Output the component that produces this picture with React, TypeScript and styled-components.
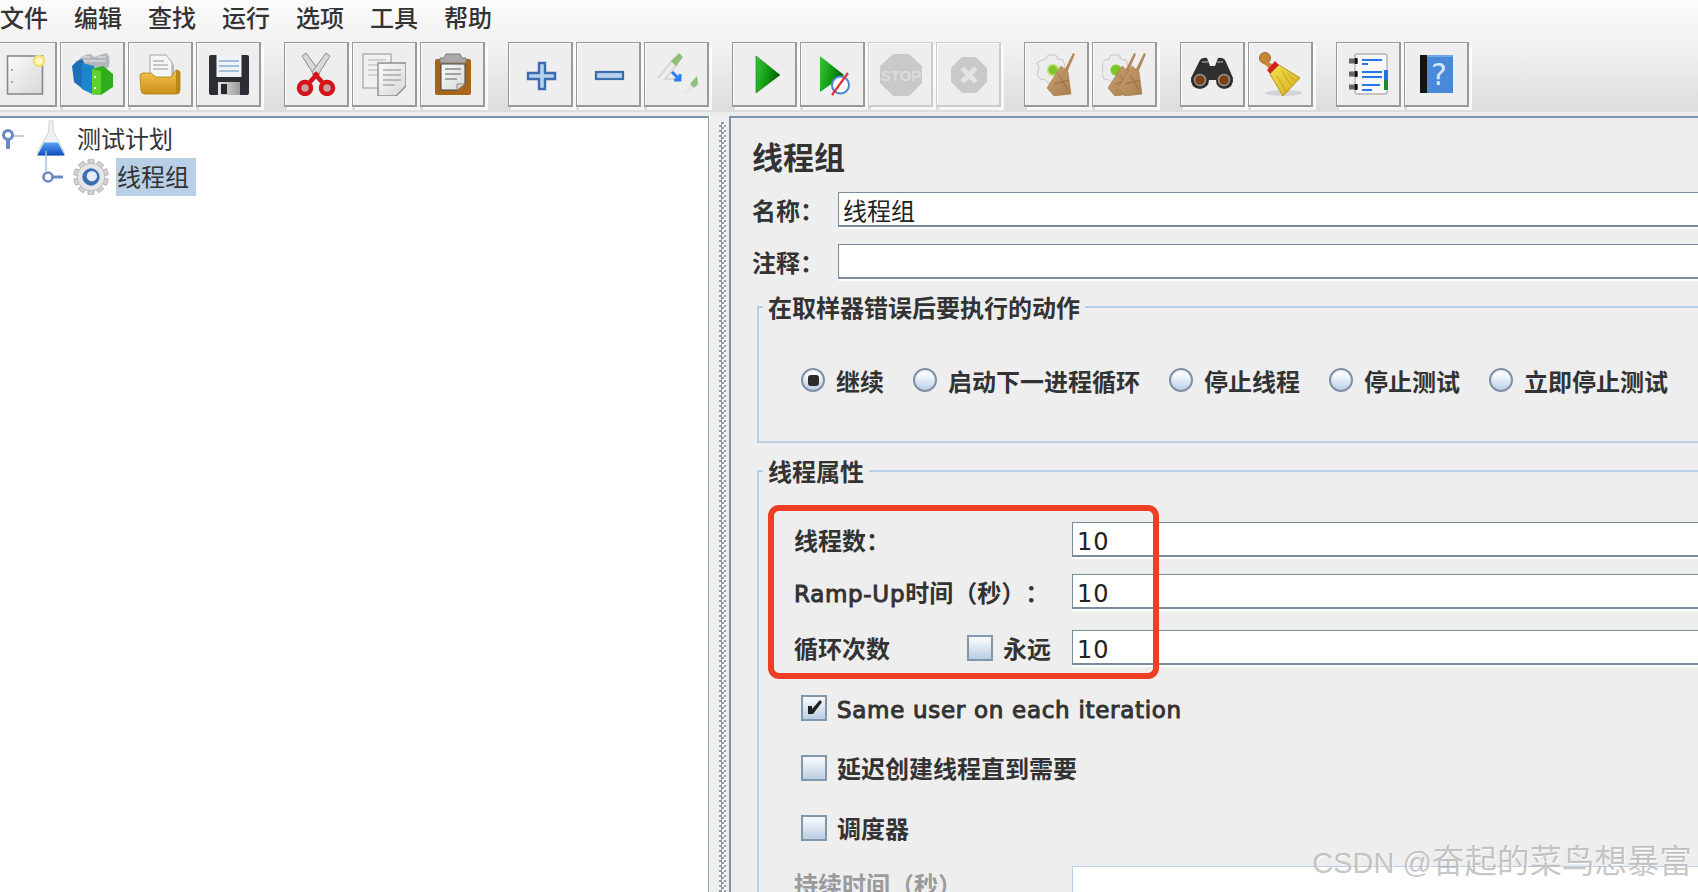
import React from "react";
import styled, { createGlobalStyle } from "styled-components";

const cjk = `"Noto Sans CJK SC", "DejaVu Sans", sans-serif`;

const Global = createGlobalStyle`
  html, body { margin: 0; padding: 0; height: 100%; overflow: hidden; background: #eeeeee; }
  body { font-family: ${cjk}; color: #333; text-spacing-trim: space-all; }
`;

const Page = styled.div`
  position: relative;
  width: 1698px;
  height: 892px;
  overflow: hidden;
  display: flex;
  flex-direction: column;
`;

const Chrome = styled.div`
  height: 116px;
  flex: none;
  background: linear-gradient(#fbfbfb 0, #f1f1f1 40%, #dcdcdc 96%, #ececec 97%);
`;

const MenuBar = styled.nav`
  height: 36px;
  display: flex;
  align-items: center;
`;

const MenuItem = styled.span`
  width: 74px;
  font-size: 24px;
  line-height: 34px;
  height: 36px;
  font-weight: 500;
  color: #333;
`;

const Toolbar = styled.div`
  display: flex;
  margin-left: -8px;
  padding-top: 6px;
  gap: 23px;
`;

const ToolGroup = styled.div`
  display: flex;
  gap: 3px;
`;

const ToolButton = styled.div<{ $off?: boolean }>`
  width: 65px;
  height: 65px;
  box-sizing: border-box;
  display: flex;
  align-items: center;
  justify-content: center;
  background: #eeeeee;
  border-style: solid;
  border-width: 1px 2px 2px 1px;
  border-color: ${(p) => (p.$off ? "#cccccc" : "#999999")};
  box-shadow: inset 1px 1px 0 #fafafa, 3px 3px 0 rgba(255, 255, 255, 0.75);
`;

const Main = styled.div`
  flex: 1;
  display: flex;
  min-height: 0;
`;

const TreePane = styled.div`
  width: 709px;
  flex: none;
  box-sizing: border-box;
  background: #fff;
  border-top: 2px solid #7e94a8;
  border-right: 1px solid #8b9eb0;
  padding-top: 2px;
`;

const TreeRow = styled.div<{ $indent: number }>`
  display: flex;
  align-items: center;
  height: 38px;
  padding-left: ${(p) => p.$indent}px;
`;

const TreeLabel = styled.span<{ $selected?: boolean }>`
  font-size: 24px;
  line-height: 36px;
  height: 38px;
  margin-left: 6px;
  padding: 0 7px 0 1px;
  color: #333;
  background: ${(p) => (p.$selected ? "#b8cfe5" : "transparent")};
`;

const Gutter = styled.div`
  width: 20px;
  flex: none;
  box-sizing: border-box;
  padding: 6px 3px 0 9px;
  background: #eeeeee;
  border-left: 1px solid #fafafa;
`;

const GripDots = styled.div`
  height: 100%;
  background: conic-gradient(#8f9aa5 25%, #fafafa 0 50%, #8f9aa5 0 75%, #fafafa 0) 0 0 / 5px 5px;
`;

const EditorPane = styled.div`
  flex: 1;
  min-width: 0;
  overflow: hidden;
  background: #eeeeee;
  border-top: 2px solid #7e94a8;
  border-left: 2px solid #7e94a8;
  padding: 20px 0 0 21px;
`;

const Title = styled.h1`
  margin: 0 0 18px;
  height: 36px;
  font-size: 31px;
  line-height: 36px;
  font-weight: 700;
  color: #333;
`;

const NameRow = styled.div`
  display: flex;
  align-items: center;
  height: 35px;
  margin-bottom: 17px;
  &:last-of-type { margin-bottom: 0; }
`;

const NameLabel = styled.span`
  width: 86px;
  flex: none;
  font-size: 24px;
  font-weight: 700;
  color: #333;
`;

const Field = styled.div<{ $off?: boolean }>`
  flex: 1;
  height: 35px;
  box-sizing: border-box;
  background: #fff;
  border-style: solid;
  border-color: ${(p) => (p.$off ? "#b8cfe5" : "#7b8b9b")};
  border-width: 1px 0 ${(p) => (p.$off ? 0 : 2)}px 1px;
  box-shadow: 0 2px 0 #fff;
  padding-left: 4px;
  font-size: 24px;
  line-height: 34px;
  color: #222;
`;

const NumberValue = styled.span`
  font-family: "DejaVu Sans", sans-serif;
  font-size: 24px;
  letter-spacing: 1px;
`;

const LatinText = styled.span`
  font-family: "DejaVu Sans", sans-serif;
  font-size: 23px;
  font-weight: 400;
  letter-spacing: 0.7px;
  -webkit-text-stroke: 1px #333;
`;

const CheckLatin = styled(LatinText)`
  margin-top: 3px;
`;

const Group = styled.fieldset<{ $height: number }>`
  height: ${(p) => p.$height}px;
  box-sizing: border-box;
  margin: 13px -20px 0 5px;
  padding: 0;
  border: 2px solid #b8cfe5;
  min-width: 0;
`;

const GroupTitle = styled.legend`
  margin-left: 4px;
  padding: 0 5px;
  height: 30px;
  font-size: 24px;
  line-height: 30px;
  font-weight: 700;
  color: #333;
`;

const RadioRow = styled.div`
  display: flex;
  align-items: center;
  gap: 29px;
  margin: 42px 0 0 42px;
`;

const RadioItem = styled.label`
  display: flex;
  align-items: center;
  gap: 11px;
  font-size: 24px;
  line-height: 34px;
  font-weight: 700;
  color: #333;
`;

const RadioDot = styled.span<{ $on?: boolean }>`
  width: 24px;
  height: 24px;
  flex: none;
  margin-top: -2px;
  box-sizing: border-box;
  border-radius: 50%;
  border: 2px solid #7f92a5;
  background: linear-gradient(#f6f9fc 25%, #b8cfe5);
  display: flex;
  align-items: center;
  justify-content: center;
  &::after {
    content: "";
    display: ${(p) => (p.$on ? "block" : "none")};
    width: 11px;
    height: 11px;
    border-radius: 3px;
    background: #2c2c2c;
  }
`;

const PropRows = styled.div`
  margin: 36px 0 0 35px;
  display: flex;
  flex-direction: column;
`;

const PropRow = styled.div<{ $below: number }>`
  display: flex;
  align-items: center;
  height: 35px;
  margin-bottom: ${(p) => p.$below}px;
`;

const PropLabel = styled.span<{ $off?: boolean }>`
  width: 278px;
  flex: none;
  font-size: 24px;
  font-weight: 700;
  color: ${(p) => (p.$off ? "#9a9a9a" : "#333")};
  white-space: nowrap;
`;

const LoopLabel = styled(PropLabel)`
  width: 173px;
`;

const ForeverLabel = styled.span`
  width: 69px;
  flex: none;
  margin-left: 10px;
  font-size: 24px;
  font-weight: 700;
  color: #333;
`;

const CheckBox = styled.span`
  width: 26px;
  height: 26px;
  flex: none;
  box-sizing: border-box;
  border: 2px solid #8297ab;
  background: linear-gradient(#f3f6f9 15%, #b9cee2);
  display: flex;
  align-items: center;
  justify-content: center;
`;

const CheckRow = styled.label`
  display: flex;
  align-items: center;
  gap: 10px;
  height: 26px;
  margin: 0 0 34px 7px;
  font-size: 24px;
  line-height: 24px;
  font-weight: 700;
  color: #333;
  white-space: nowrap;
  &:nth-last-of-type(1) { margin-bottom: 25px; }
`;

const Highlight = styled.div`
  position: absolute;
  left: 768px;
  top: 505px;
  width: 391px;
  height: 174px;
  box-sizing: border-box;
  border: 6px solid #ee3f24;
  border-radius: 11px;
  pointer-events: none;
`;

const Watermark = styled.div`
  position: absolute;
  right: 6px;
  top: 842px;
  font-family: "Liberation Sans", "Noto Sans CJK SC", sans-serif;
  font-size: 32.5px;
  line-height: 40px;
  color: rgba(150, 150, 150, 0.55);
  text-shadow: 1px 1px 1px rgba(255, 255, 255, 0.9);
  white-space: nowrap;
  pointer-events: none;
`;

const WatermarkLatin = styled.span`
  font-size: 29px;
`;

const Svg: React.FC<{ children: React.ReactNode; size?: number }> = ({ children, size = 44 }) => (
  <svg width={size} height={size} viewBox="0 0 44 44" style={{ flex: "none" }}>
    {children}
  </svg>
);

const Defs = () => (
  <svg width="0" height="0" style={{ position: "absolute" }}>
    <defs>
      <linearGradient id="paper" x1="0" y1="0" x2="1" y2="1">
        <stop offset="0" stopColor="#fafafa" />
        <stop offset="1" stopColor="#d8d8d8" />
      </linearGradient>
      <linearGradient id="folder" x1="0" y1="0" x2="0" y2="1">
        <stop offset="0" stopColor="#f3c650" />
        <stop offset="1" stopColor="#cc8f18" />
      </linearGradient>
      <linearGradient id="play" x1="0" y1="0" x2="1" y2="0.3">
        <stop offset="0" stopColor="#3dc53d" />
        <stop offset="0.6" stopColor="#0c9a0c" />
        <stop offset="1" stopColor="#045a04" />
      </linearGradient>
      <linearGradient id="broomStraw" x1="0" y1="0" x2="1" y2="1">
        <stop offset="0" stopColor="#c9a070" />
        <stop offset="1" stopColor="#a97f4e" />
      </linearGradient>
      <linearGradient id="gold" x1="0" y1="0" x2="1" y2="1">
        <stop offset="0" stopColor="#f5e35a" />
        <stop offset="1" stopColor="#d2aa12" />
      </linearGradient>
      <linearGradient id="flask" x1="0" y1="0" x2="0" y2="1">
        <stop offset="0" stopColor="#5aa0f0" />
        <stop offset="1" stopColor="#0c4fc0" />
      </linearGradient>
      <linearGradient id="shutter" x1="0" y1="0" x2="1" y2="0">
        <stop offset="0" stopColor="#e6e6e6" />
        <stop offset="1" stopColor="#9a9a9a" />
      </linearGradient>
    </defs>
  </svg>
);

const NewIcon = () => (
  <Svg>
    <rect x="5.5" y="4" width="35" height="38" fill="url(#paper)" stroke="#8a8a8a" strokeWidth="1.6" />
    <rect x="9" y="17" width="2" height="2" fill="#aaa" />
    <rect x="9" y="29" width="2" height="2" fill="#aaa" />
    <circle cx="37" cy="9" r="5" fill="#fff8c0" stroke="#f2e070" strokeWidth="2.4" />
  </Svg>
);

const TemplatesIcon = () => (
  <Svg>
    <path d="M7 12 Q10 2 21 2 L24 5 L36 1 Q41 3 39 14 L26 30 Z" fill="#b4b8ba" />
    <path d="M11 5 H20 M27 5 H36 M11 9 H36" stroke="#d6d8da" strokeWidth="1.4" />
    <path d="M7 9 L12 7 L14 10 V38 L4 30 L2 14 Z" fill="#1d6fb8" />
    <path d="M12 11 L24 14 V43 L12 37 Z" fill="#1a86cf" />
    <path d="M22 17 L33 14 L43 22 V35 L31 43 L22 42 Z" fill="#2fae1c" />
    <path d="M22 17 L31 19 V43 L22 42 Z" fill="#5fd02e" />
    <rect x="24" y="24" width="2" height="2" fill="#fff" />
    <rect x="24" y="35" width="2" height="2" fill="#fff" />
  </Svg>
);

const OpenIcon = () => (
  <Svg>
    <path d="M12 3 H28 L34 10 V26 H12 Z" fill="#f6f6f6" stroke="#a5a5a5" />
    <path d="M15 9 H26 M15 13 H30 M15 17 H30" stroke="#b5b5b5" strokeWidth="1.4" />
    <path d="M34 10 V26 H36 V13 Z" fill="#b8b8b8" />
    <path d="M2 24 Q2 21 5 21 L13 21 L18 25 L33 25 L38 18 Q42 18 42 21 V38 Q42 42 38 42 H7 Q3 42 3 38 Z" fill="url(#folder)" stroke="#ae7d12" strokeWidth="0.8" />
    <path d="M38 18 Q42 18 42 21 V38 Q42 42 38 42 Z" fill="#b9861c" />
  </Svg>
);

const SaveIcon = () => (
  <Svg>
    <rect x="3" y="3" width="40" height="40" rx="2" fill="#2b2e33" />
    <rect x="10.5" y="3" width="25" height="22" fill="#eef3f8" />
    <path d="M13 9 H33 M13 14 H33 M13 19 H33" stroke="#a3bedb" strokeWidth="1.8" />
    <rect x="12" y="30" width="22" height="13" fill="url(#shutter)" />
    <rect x="15" y="32" width="6" height="10" fill="#26282b" />
  </Svg>
);

const CutIcon = () => (
  <Svg>
    <path d="M8 4 L12 1 L26 20 L22 26 Z" fill="#d9d9d9" stroke="#8c8c8c" />
    <path d="M36 4 L32 1 L18 20 L22 26 Z" fill="#d9d9d9" stroke="#8c8c8c" />
    <path d="M16 30 L24 21 M28 30 L20 21" stroke="#d4121a" strokeWidth="4.5" />
    <circle cx="11" cy="36" r="6" fill="#c9a0a0" stroke="#d4121a" strokeWidth="4.5" />
    <circle cx="33" cy="36" r="6" fill="#c9a0a0" stroke="#d4121a" strokeWidth="4.5" />
  </Svg>
);

const CopyIcon = () => (
  <Svg>
    <rect x="1" y="2" width="28" height="34" fill="#f0f0f0" stroke="#adadad" strokeWidth="1.4" />
    <path d="M6 8 H24 M6 13 H24 M6 18 H16 M6 23 H16" stroke="#c8c8c8" strokeWidth="1.4" />
    <path d="M16 11 H44 V34 L34 44 H16 Z" fill="url(#paper)" stroke="#8c8c8c" strokeWidth="1.4" />
    <path d="M21 18 H39 M21 23 H39 M21 28 H39 M21 33 H33" stroke="#aaa" strokeWidth="1.4" />
  </Svg>
);

const PasteIcon = () => (
  <Svg>
    <rect x="5" y="7" width="36" height="36" rx="2" fill="#a6651a" />
    <path d="M11 12 H35 V32 L27 38 H11 Z" fill="url(#paper)" stroke="#444" strokeWidth="1" />
    <path d="M16 2 H30 L32 6 H36 V11 H10 V6 H14 Z" fill="#a8a8a8" stroke="#7c7c7c" />
    <path d="M15 17 H31 M15 22 H31 M15 27 H27" stroke="#8a8a8a" strokeWidth="1.6" />
    <path d="M27 38 V32 H35" fill="#d6d6d6" stroke="#888" />
  </Svg>
);

const PlusIcon = () => (
  <Svg>
    <path d="M21 11 H27 V21 H37 V27 H27 V37 H21 V27 H10 V21 H21 Z" fill="#b8d0ec" stroke="#3a6cae" strokeWidth="2.4" />
  </Svg>
);

const MinusIcon = () => (
  <Svg>
    <rect x="10" y="20" width="27" height="7" fill="#b8d0ec" stroke="#3a6cae" strokeWidth="2.2" />
  </Svg>
);

const ToggleIcon = () => (
  <Svg>
    <path d="M4 26 L18 9 L23 13 L11 27 H24" fill="none" stroke="#d8d8d8" strokeWidth="2.2" />
    <path d="M17 9 L25 1 L29 5 L22 14 Z" fill="#8fbf7c" />
    <path d="M18 20 L26 28 M26 22 V28 H20" fill="none" stroke="#2a7ef5" strokeWidth="3" />
    <path d="M28 42 L37 31 L41 34 L33 43 Z" fill="#e8e8e8" />
    <path d="M36 32 L43 24 L44 32 L40 36 Z" fill="#8fbf7c" />
  </Svg>
);

const PlayIcon = () => (
  <Svg>
    <path d="M14 4 L38 23 L14 41 Z" fill="url(#play)" stroke="#15751a" strokeWidth="0.6" />
  </Svg>
);

const PlayNoTimerIcon = () => (
  <Svg>
    <path d="M10 4 L34 23 L10 40 Z" fill="url(#play)" />
    <circle cx="30.5" cy="33" r="8.5" fill="#fff" stroke="#4a86d0" strokeWidth="2" />
    <path d="M22 43 L38 21" stroke="#e1323c" strokeWidth="2.2" />
  </Svg>
);

const StopIcon = () => (
  <Svg>
    <path d="M15 2 H31 L44 14 V31 L31 44 H15 L2 31 V14 Z" fill="#c9c9c9" />
    <text x="23" y="28.5" textAnchor="middle" fontFamily="Liberation Sans, sans-serif" fontWeight="700" fontSize="15" fill="#dcdcdc">
      STOP
    </text>
  </Svg>
);

const ShutdownIcon = () => (
  <Svg>
    <path d="M16 5 H30 L41 16 V30 L30 41 H16 L5 30 V16 Z" fill="#c9c9c9" />
    <path d="M16 16 L30 30 M30 16 L16 30" stroke="#e4e4e4" strokeWidth="5" />
  </Svg>
);

const Broom = ({ dx = 0 }: { dx?: number }) => (
  <g transform={`translate(${dx} 0)`}>
    <path d="M39 1 L41 2 L33 21 L30 19 Z" fill="#b08a5c" />
    <path d="M27 14 L34 20 L37 42 L20 44 L13 36 Z" fill="url(#broomStraw)" stroke="#a1794a" strokeWidth="0.6" />
    <path d="M20 32 L35 28 M25 23 L34 38" stroke="#8f6a3e" strokeWidth="0.8" />
  </g>
);

const ClearIcon = () => (
  <Svg>
    <path d="M14 3 H22 L24 7 L29 8 L31 14 L29 22 L24 32 L15 32 L12 28 L6 27 L3 22 L5 15 L3 11 L8 8 L12 7 Z" fill="#ececec" stroke="#c6c6c6" />
    <circle cx="19" cy="18" r="5.5" fill="#7fc72b" stroke="#c6e48e" strokeWidth="1.6" />
    <Broom />
  </Svg>
);

const ClearAllIcon = () => (
  <Svg>
    <path d="M9 3 H17 L19 7 L24 8 L26 14 L24 22 L19 32 L10 32 L7 28 L2 27 L0 22 L1 15 L0 11 L3 8 L7 7 Z" fill="#ececec" stroke="#c6c6c6" />
    <circle cx="14" cy="18" r="5.5" fill="#7fc72b" />
    <Broom dx={-7} />
    <Broom dx={3} />
  </Svg>
);

const SearchIcon = () => (
  <Svg>
    <path d="M9 10 Q11 5 17 6 L20 14 H25 L28 6 Q34 5 36 10 L43 26 Q44 36 34 37 Q26 36 26 28 H19 Q19 36 10 37 Q0 36 1 26 Z" fill="#2f2f2f" />
    <path d="M12 10 H18 M27 10 H33" stroke="#777" strokeWidth="2" />
    <circle cx="10" cy="28" r="5.5" fill="#7a3f14" stroke="#999" strokeWidth="1.4" />
    <circle cx="34" cy="28" r="5.5" fill="#7a3f14" stroke="#999" strokeWidth="1.4" />
  </Svg>
);

const ResetIcon = () => (
  <Svg>
    <ellipse cx="26" cy="41" rx="19" ry="3" fill="#d4d4d4" />
    <circle cx="7" cy="6" r="5.5" fill="#c6873a" stroke="#a0682a" />
    <path d="M8 9 L16 13 L14 19 L6 12 Z" fill="#c6873a" />
    <path d="M9 18 L17 9 L21 13 L13 23 Z" fill="#d81f22" />
    <path d="M12 22 L21 13 L42 26 L25 44 Z" fill="url(#gold)" stroke="#b5951a" />
    <path d="M19 24 L28 40 M24 19 L33 33 M29 21 L37 29" stroke="#c9a516" strokeWidth="1" />
  </Svg>
);

const LogIcon = () => (
  <Svg>
    <rect x="9" y="2" width="32" height="40" rx="2" fill="#f7f7f7" stroke="#b4b4b4" strokeWidth="1.4" />
    <rect x="38" y="18" width="4" height="10" fill="#2372d8" />
    <rect x="38" y="28" width="4" height="10" fill="#1d8a2c" />
    <path d="M3 9 H12 M3 22 H12 M3 35 H12" stroke="#666" strokeWidth="5" />
    <path d="M10 6 V12 M10 19 V25 M10 32 V38" stroke="#111" strokeWidth="2.4" />
    <path d="M16 8 H36 M16 12 H22 M16 20 H36 M16 25 H36 M16 33 H34 M16 38 H26" stroke="#2278f0" strokeWidth="2" />
  </Svg>
);

const HelpIcon = () => (
  <Svg>
    <path d="M6 3 H39 V41 H6 Z" fill="#4a88d8" />
    <rect x="6" y="3" width="7" height="38" fill="#141414" />
    <rect x="13" y="3" width="26" height="2" fill="#6fa6e8" />
    <text x="25" y="33" textAnchor="middle" fontFamily="DejaVu Sans, sans-serif" fontSize="30" fill="#d8e6f6">
      ?
    </text>
  </Svg>
);

const FlaskIcon = () => (
  <Svg size={38}>
    <path d="M20 0 L24 0 L25 14 L37 36 Q39 41 33 41 H11 Q5 41 7 36 L19 14 Z" fill="#eef1f4" stroke="#c8ced4" />
    <path d="M14 26 H30 L38 41 H6 Z" fill="url(#flask)" />
  </Svg>
);

const GearIcon = () => {
  const teeth = Array.from({ length: 10 }, (_, i) => i * 36);
  return (
    <Svg size={38}>
      {teeth.map((a) => (
        <rect key={a} x="18.5" y="2" width="7" height="9" fill="#d2d2d2" stroke="#a4a4a4" strokeWidth="0.8" transform={`rotate(${a} 22 22)`} />
      ))}
      <circle cx="22" cy="22" r="16" fill="#e6e6e6" stroke="#b4b4b4" />
      <circle cx="22" cy="22" r="10" fill="#3c6eb4" />
      <circle cx="23" cy="21" r="6" fill="#e4edf8" />
    </Svg>
  );
};

const HandleRoot = () => (
  <svg width="30" height="24" viewBox="0 0 30 24" style={{ flex: "none" }}>
    <path d="M8 9 H24" stroke="#a9bfdd" strokeWidth="1.5" />
    <rect x="6" y="12" width="4" height="10" fill="#6a8ac6" />
    <circle cx="8" cy="8" r="4.5" fill="#fff" stroke="#6a8ac6" strokeWidth="3" />
  </svg>
);

const HandleChild = () => (
  <svg width="24" height="14" viewBox="0 0 24 14" style={{ flex: "none", overflow: "visible" }}>
    <path d="M6 -19 V1" stroke="#a9bfdd" strokeWidth="1.5" />
    <path d="M10 7 H23" stroke="#6a8ac6" strokeWidth="3" />
    <circle cx="8" cy="7" r="4.5" fill="#fff" stroke="#6a8ac6" strokeWidth="2.6" />
  </svg>
);

const HandleSlot = styled.span<{ $w: number }>`
  width: ${(p) => p.$w}px;
  flex: none;
  display: flex;
  align-items: center;
`;

const tools: { off?: boolean; icon: React.ReactNode }[][] = [
  [{ icon: <NewIcon /> }, { icon: <TemplatesIcon /> }, { icon: <OpenIcon /> }, { icon: <SaveIcon /> }],
  [{ icon: <CutIcon /> }, { icon: <CopyIcon /> }, { icon: <PasteIcon /> }],
  [{ icon: <PlusIcon /> }, { icon: <MinusIcon /> }, { icon: <ToggleIcon /> }],
  [{ icon: <PlayIcon /> }, { icon: <PlayNoTimerIcon /> }, { off: true, icon: <StopIcon /> }, { off: true, icon: <ShutdownIcon /> }],
  [{ icon: <ClearIcon /> }, { icon: <ClearAllIcon /> }],
  [{ icon: <SearchIcon /> }, { icon: <ResetIcon /> }],
  [{ icon: <LogIcon /> }, { icon: <HelpIcon /> }],
];

const menus = ["文件", "编辑", "查找", "运行", "选项", "工具", "帮助"];
const radios = ["继续", "启动下一进程循环", "停止线程", "停止测试", "立即停止测试"];

const Check = () => (
  <svg width="18" height="18" viewBox="0 0 18 18">
    <path d="M15 1 L17 3 L8 15 H3 V7 H7 V10 Z" fill="#222" />
  </svg>
);

export default function App() {
  return (
    <Page>
      <Global />
      <Defs />
      <Chrome>
        <MenuBar>
          {menus.map((m) => (
            <MenuItem key={m}>{m}</MenuItem>
          ))}
        </MenuBar>
        <Toolbar>
          {tools.map((group, g) => (
            <ToolGroup key={g}>
              {group.map((t, i) => (
                <ToolButton key={i} $off={t.off}>
                  {t.icon}
                </ToolButton>
              ))}
            </ToolGroup>
          ))}
        </Toolbar>
      </Chrome>
      <Main>
        <TreePane>
          <TreeRow $indent={0}>
            <HandleSlot $w={32}>
              <HandleRoot />
            </HandleSlot>
            <FlaskIcon />
            <TreeLabel>测试计划</TreeLabel>
          </TreeRow>
          <TreeRow $indent={40}>
            <HandleSlot $w={32}>
              <HandleChild />
            </HandleSlot>
            <GearIcon />
            <TreeLabel $selected>线程组</TreeLabel>
          </TreeRow>
        </TreePane>
        <Gutter>
          <GripDots />
        </Gutter>
        <EditorPane>
          <Title>线程组</Title>
          <NameRow>
            <NameLabel>名称：</NameLabel>
            <Field>线程组</Field>
          </NameRow>
          <NameRow>
            <NameLabel>注释：</NameLabel>
            <Field />
          </NameRow>
          <Group $height={151}>
            <GroupTitle>在取样器错误后要执行的动作</GroupTitle>
            <RadioRow>
              {radios.map((r, i) => (
                <RadioItem key={r}>
                  <RadioDot $on={i === 0} />
                  {r}
                </RadioItem>
              ))}
            </RadioRow>
          </Group>
          <Group $height={600}>
            <GroupTitle>线程属性</GroupTitle>
            <PropRows>
              <PropRow $below={17}>
                <PropLabel>线程数：</PropLabel>
                <Field>
                  <NumberValue>10</NumberValue>
                </Field>
              </PropRow>
              <PropRow $below={21}>
                <PropLabel>
                  <LatinText>Ramp-Up</LatinText>时间（秒）：
                </PropLabel>
                <Field>
                  <NumberValue>10</NumberValue>
                </Field>
              </PropRow>
              <PropRow $below={30}>
                <LoopLabel>循环次数</LoopLabel>
                <CheckBox />
                <ForeverLabel>永远</ForeverLabel>
                <Field>
                  <NumberValue>10</NumberValue>
                </Field>
              </PropRow>
              <CheckRow>
                <CheckBox>
                  <Check />
                </CheckBox>
                <CheckLatin>Same user on each iteration</CheckLatin>
              </CheckRow>
              <CheckRow>
                <CheckBox />
                延迟创建线程直到需要
              </CheckRow>
              <CheckRow>
                <CheckBox />
                调度器
              </CheckRow>
              <PropRow $below={0}>
                <PropLabel $off>持续时间（秒）</PropLabel>
                <Field $off />
              </PropRow>
            </PropRows>
          </Group>
        </EditorPane>
      </Main>
      <Highlight />
      <Watermark>
        <WatermarkLatin>CSDN @</WatermarkLatin>奋起的菜鸟想暴富
      </Watermark>
    </Page>
  );
}
